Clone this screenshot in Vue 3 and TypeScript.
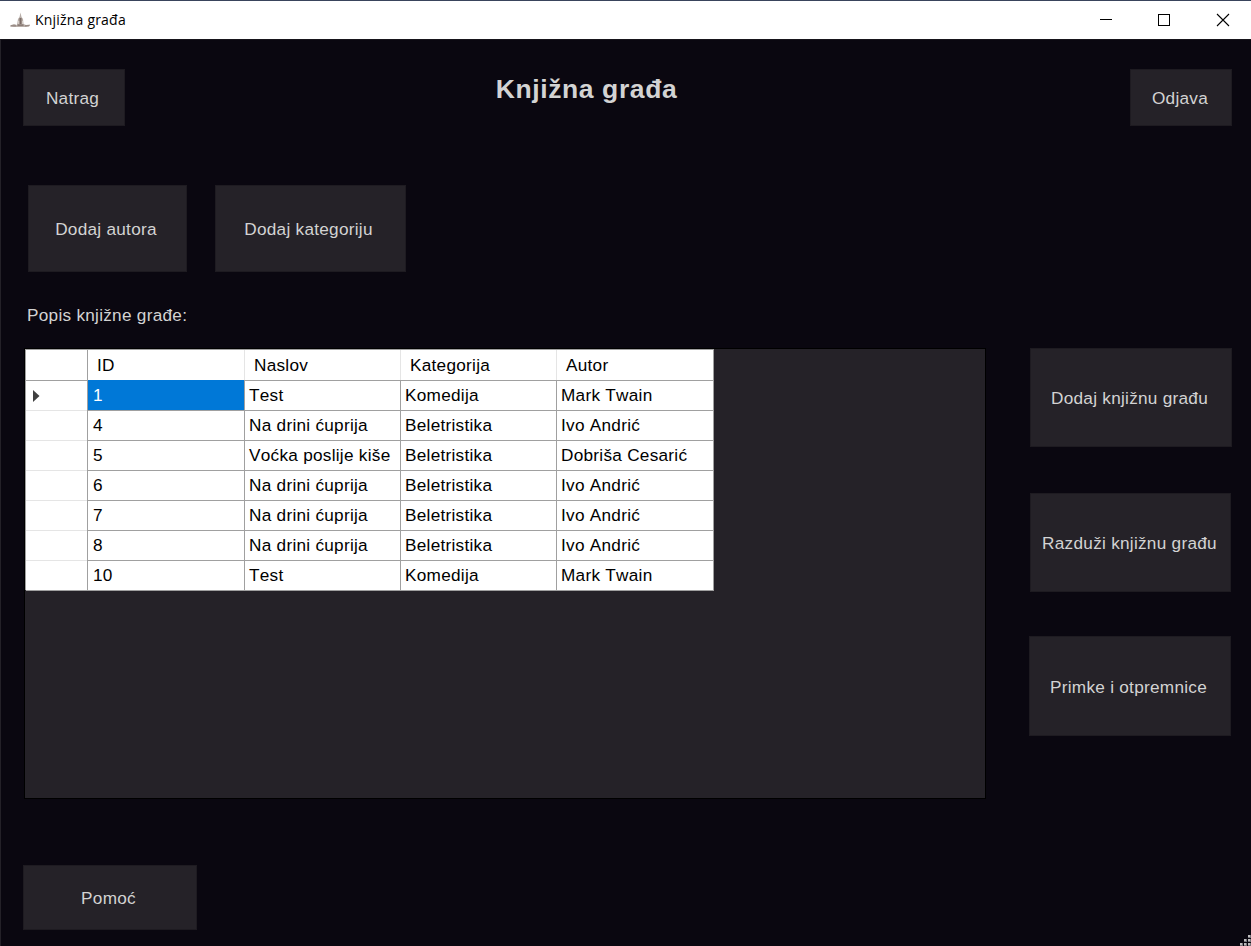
<script setup lang="ts">
import { ref } from 'vue'

interface Item {
  id: number
  title: string
  category: string
  author: string
}

const columns: string[] = ['ID', 'Naslov', 'Kategorija', 'Autor']
const items: Item[] = [
  { id: 1, title: 'Test', category: 'Komedija', author: 'Mark Twain' },
  { id: 4, title: 'Na drini ćuprija', category: 'Beletristika', author: 'Ivo Andrić' },
  { id: 5, title: 'Voćka poslije kiše', category: 'Beletristika', author: 'Dobriša Cesarić' },
  { id: 6, title: 'Na drini ćuprija', category: 'Beletristika', author: 'Ivo Andrić' },
  { id: 7, title: 'Na drini ćuprija', category: 'Beletristika', author: 'Ivo Andrić' },
  { id: 8, title: 'Na drini ćuprija', category: 'Beletristika', author: 'Ivo Andrić' },
  { id: 10, title: 'Test', category: 'Komedija', author: 'Mark Twain' },
]
const selected = ref(0)
</script>

<template>
  <div class="window">
    <header class="titlebar">
      <svg class="app-icon" width="20" height="16" viewBox="0 0 20 16">
        <path d="M0 13.5 4 12 7 13 8 7 9.5 5 10.5 0.5 11.5 5 13 7 13.5 12 16 13 20 12.5V14L16 15H4L0 14.5Z" fill="#b8aea8" />
        <path d="M9.5 6h2v6h-2zM7.5 12.5h6v1.2h-6zM1 13.4h5v.8H1zM15 13.4h4v.8h-4z" fill="#7c6d67" />
        <path d="M8.2 9h1v3h-1zM12 9h.8v3H12z" fill="#ded7d1" />
      </svg>
      <span class="caption">Knjižna građa</span>
      <svg class="controls" width="132" height="14" viewBox="0 0 132 14" shape-rendering="crispEdges">
        <path d="M1 6.5h12" stroke="#000" fill="none" />
        <rect x="59.5" y="1.5" width="11" height="11" stroke="#000" fill="none" />
        <path d="M118 1l12 12M130 1l-12 12" stroke="#000" stroke-width="1.1" fill="none" shape-rendering="auto" />
      </svg>
    </header>

    <main class="form">
      <div class="top">
        <button class="btn nav back">Natrag</button>
        <h1>Knjižna građa</h1>
        <button class="btn nav logout">Odjava</button>
      </div>

      <div class="tools">
        <button class="btn add-author">Dodaj autora</button>
        <button class="btn add-category">Dodaj kategoriju</button>
      </div>

      <p class="label">Popis knjižne građe:</p>

      <div class="content">
        <div class="list">
          <div class="grid">
            <div class="row head">
              <span class="cell marker"></span>
              <span v-for="c in columns" :key="c" class="cell">{{ c }}</span>
            </div>
            <div v-for="(item, i) in items" :key="item.id" class="row" @click="selected = i">
              <span class="cell marker">
                <svg v-if="i === selected" width="7" height="12" viewBox="0 0 7 12">
                  <path d="M0 0 6.5 6 0 12Z" fill="#404040" />
                </svg>
              </span>
              <span class="cell number" :class="{ active: i === selected }">{{ item.id }}</span>
              <span class="cell">{{ item.title }}</span>
              <span class="cell">{{ item.category }}</span>
              <span class="cell">{{ item.author }}</span>
            </div>
          </div>
        </div>
        <aside class="side">
          <button class="btn add-item">Dodaj knjižnu građu</button>
          <button class="btn discharge">Razduži knjižnu građu</button>
          <button class="btn receipts">Primke i otpremnice</button>
        </aside>
      </div>

      <button class="btn help">Pomoć</button>

      <svg class="grip" width="11" height="11" viewBox="0 0 11 11" shape-rendering="crispEdges">
        <path d="M8 0h3v3H8zM4 4h3v3H4zM8 4h3v3H8zM0 8h3v3H0zM4 8h3v3H4zM8 8h3v3H8z" fill="#77757a" />
        <path d="M8 0h2v2H8zM4 4h2v2H4zM8 4h2v2H8zM0 8h2v2H0zM4 8h2v2H4zM8 8h2v2H8z" fill="#bdbbbd" />
      </svg>
    </main>
  </div>
</template>

<style>
body {
  margin: 0;
  overflow: hidden;
}
</style>

<style scoped>
.window {
  width: 1251px;
  height: 946px;
  display: flex;
  flex-direction: column;
  font-family: "Liberation Sans", Arial, sans-serif;
  font-size: 17.2px;
  letter-spacing: 0.27px;
  font-kerning: none;
  overflow: hidden;
}
.titlebar {
  height: 39px;
  box-sizing: border-box;
  border-top: 1px solid #39445c;
  background: #fff;
  display: flex;
  align-items: center;
  padding: 0 20px 0 10px;
  color: #000;
}
.app-icon {
  margin-right: 5px;
}
.caption {
  font-family: "Open Sans", "Noto Sans", sans-serif;
  font-size: 14px;
  letter-spacing: 0.2px;
  line-height: 20px;
}
.controls {
  margin-left: auto;
}
.form {
  position: relative;
  box-sizing: border-box;
  flex: 1;
  border-left: 1px solid #242128;
  border-top: 1px solid #17151b;
  background: #0a0710;
  padding: 29px 19px 0 22px;
}
.btn {
  box-sizing: border-box;
  border: 1px solid #1e1b21;
  background: #252228;
  color: #d3d3d3;
  font: inherit;
  font-kerning: none;
  letter-spacing: inherit;
  white-space: nowrap;
  padding: 2px 0 0;
  display: block;
}
.top {
  display: flex;
  justify-content: space-between;
  height: 56px;
}
.nav {
  width: 102px;
  height: 57px;
}
.back {
  padding-right: 3px;
}
.logout {
  padding-right: 2px;
}
h1 {
  margin: 3px 0 0 -82px;
  font-size: 26.5px;
  line-height: 34px;
  letter-spacing: 0.6px;
  color: #d3d3d3;
}
.tools {
  display: flex;
  gap: 28px;
  margin: 60px 0 0 5px;
}
.add-author {
  width: 159px;
  height: 87px;
  padding-right: 3px;
}
.add-category {
  width: 191px;
  height: 87px;
  padding-right: 4px;
}
.label {
  margin: 32px 0 0 4px;
  line-height: 22px;
  color: #d3d3d3;
}
.content {
  display: flex;
  justify-content: space-between;
  margin: 22px 0 0 1px;
}
.list {
  box-sizing: border-box;
  width: 962px;
  height: 451px;
  border: 1px solid #000;
  background: #252228;
}
.grid {
  box-sizing: border-box;
  width: 689px;
  border-left: 1px solid #a0a0a0;
  border-top: 1px solid #a0a0a0;
  background: #fff;
  color: #000;
}
.row {
  display: grid;
  grid-template-columns: 62px 157px 156px 156px 157px;
  height: 30px;
}
.cell {
  box-sizing: border-box;
  border-right: 1px solid #a0a0a0;
  border-bottom: 1px solid #a0a0a0;
  padding: 1px 0 0 4px;
  line-height: 29px;
  white-space: nowrap;
}
.number {
  padding-left: 5px;
}
.head .cell {
  padding-left: 9px;
  border-right-color: #e5e5e5;
}
.head .cell:last-child,
.head .cell.marker {
  border-right-color: #a0a0a0;
}
.row:not(.head) .marker {
  display: flex;
  align-items: center;
  border-bottom-color: #e5e5e5;
  padding: 2px 0 0 7px;
}
.row:last-child .marker {
  border-bottom-color: #a0a0a0;
}
.active {
  background: #0078d7;
  color: #fff;
}
.side {
  width: 203px;
}
.add-item {
  width: 202px;
  height: 99px;
  margin-left: 1px;
  padding-right: 3px;
}
.discharge {
  width: 201px;
  height: 99px;
  margin: 46px 0 0 1px;
  padding-right: 2px;
}
.receipts {
  width: 202px;
  height: 100px;
  margin-top: 44px;
  padding-right: 3px;
}
.help {
  width: 174px;
  height: 65px;
  margin-top: 66px;
  padding-right: 3px;
}
.grip {
  position: absolute;
  right: 0;
  bottom: 0;
}
</style>
